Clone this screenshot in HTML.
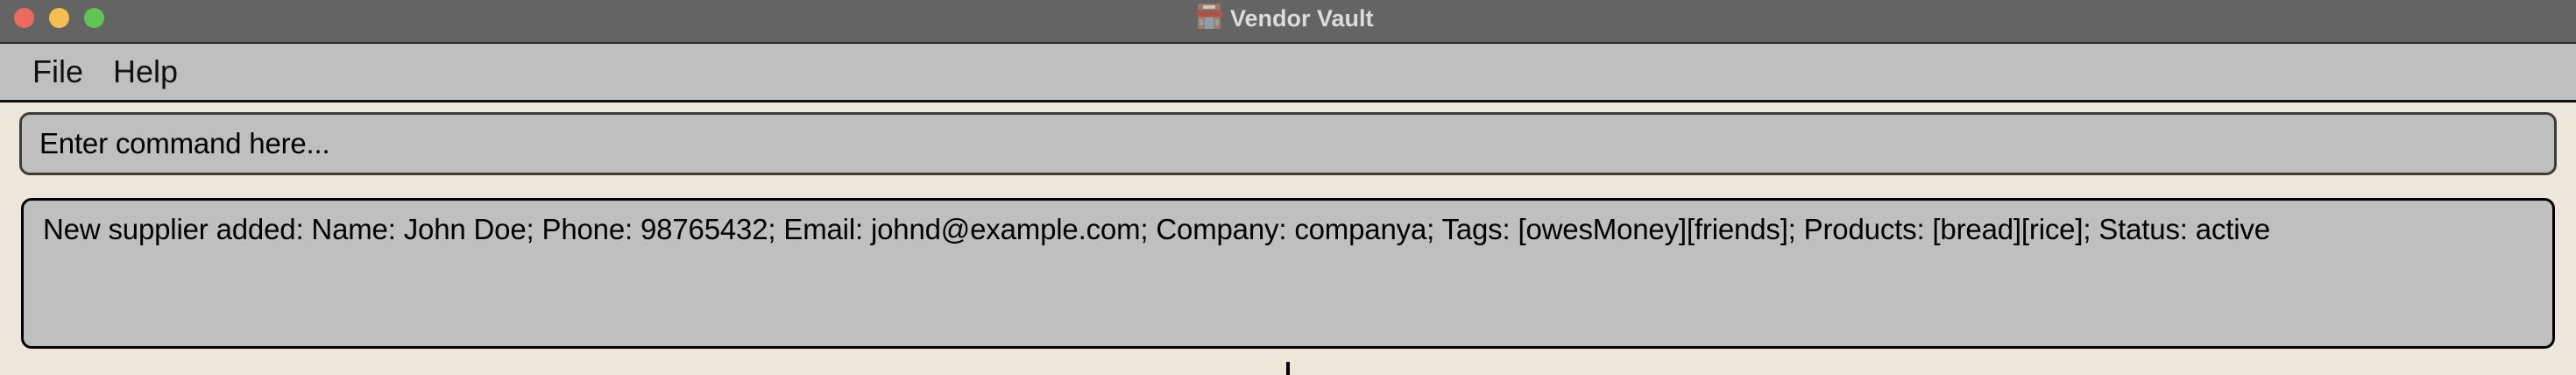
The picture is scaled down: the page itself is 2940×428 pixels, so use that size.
<!DOCTYPE html>
<html><head><style>
body{margin:0;width:2940px;height:428px;background:#ede6da;position:relative;overflow:hidden;font-family:"Liberation Sans",sans-serif}
.tb{position:absolute;left:0;top:0;width:2940px;height:48px;background:#646464;border-bottom:2px solid #2a2a2a}
.dot{position:absolute;top:9px;width:23px;height:23px;border-radius:50%}
.menu{position:absolute;left:0;top:50px;width:2940px;height:64px;background:#bfbfbf;border-bottom:3px solid #111}
.box{position:absolute;background:#bfbfbf;border-radius:12px;box-sizing:border-box}
</style></head><body>
<div class="tb">
<div class="dot" style="left:16px;background:#ec6a5e"></div>
<div class="dot" style="left:56px;background:#f5bf4f"></div>
<div class="dot" style="left:96px;background:#61c554"></div>
<svg style="position:absolute;left:1365px;top:4px" width="30" height="29" viewBox="0 0 30 29">
<rect x="2" y="0" width="26" height="8" fill="#9b7660"/><rect x="8" y="2" width="14" height="4" fill="#cfc7bf"/>
<rect x="0" y="9" width="30" height="6" fill="#b0504a"/><rect x="2" y="15" width="26" height="14" fill="#a8785e"/>
<rect x="10" y="16" width="10" height="13" fill="#8aa0b0"/><rect x="4" y="18" width="4" height="7" fill="#8aa0b0"/><rect x="22" y="18" width="4" height="7" fill="#8aa0b0"/></svg>
<div style="position:absolute;left:1404px;top:4px;font-size:27px;font-weight:bold;color:#dcdcdc;line-height:34px">Vendor Vault</div>
</div>
<div class="menu">
<span style="position:absolute;left:37px;top:11px;font-size:36px;color:#111">File</span>
<span style="position:absolute;left:129px;top:11px;font-size:36px;color:#111">Help</span>
</div>
<div class="box" style="left:22px;top:128px;width:2896px;height:72px;border:3px solid #3c3c3c">
<span style="position:absolute;left:20px;top:14px;font-size:33px;color:#000;letter-spacing:-0.2px">Enter command here...</span>
</div>
<div class="box" style="left:24px;top:226px;width:2892px;height:172px;border:3px solid #000">
<span style="position:absolute;left:22px;top:14px;font-size:33px;color:#000;white-space:nowrap;letter-spacing:-0.18px">New supplier added: Name: John Doe; Phone: 98765432; Email: johnd@example.com; Company: companya; Tags: [owesMoney][friends]; Products: [bread][rice]; Status: active</span>
</div>
<div style="position:absolute;left:1468px;top:413px;width:4px;height:15px;background:#000"></div>
</body></html>
